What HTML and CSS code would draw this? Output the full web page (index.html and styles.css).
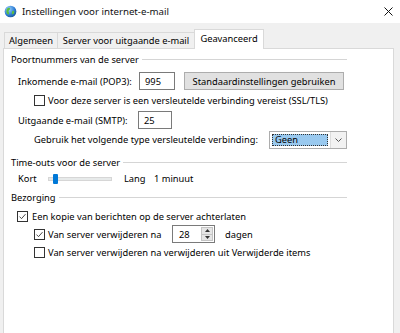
FILE: index.html
```html
<!DOCTYPE html>
<html lang="nl">
<head>
<meta charset="utf-8">
<title>Instellingen voor internet-e-mail</title>
<link rel="stylesheet" href="styles.css">
</head>
<body>
<div class="titlebar">
  <svg class="app-icon" viewBox="0 0 14 14" aria-hidden="true">
    <defs>
      <radialGradient id="g" cx="0.35" cy="0.3" r="0.8">
        <stop offset="0" stop-color="#9fd3ff"/>
        <stop offset="0.6" stop-color="#2f7fd6"/>
        <stop offset="1" stop-color="#17508f"/>
      </radialGradient>
    </defs>
    <circle cx="7" cy="7" r="6.3" fill="url(#g)"/>
    <path d="M4.2 3.2c1.3-.6 2.6 0 2.4 1.2-.2 1.1-1.600 1-1.7 2.2-.1 1.2 1 1.7.6 2.9-.4 1-1.7.8-2.3-.3C2.5 8 2.4 5.9 3 4.6c.3-.6.7-1.1 1.2-1.4z" fill="#5bbf3f"/>
    <path d="M9.2 6.4c1-.3 1.9.3 1.8 1.3-.1 1.2-1.2 2.4-2.1 2.2-.8-.2-.6-1.2-.3-1.9.2-.6 0-1.4.6-1.6z" fill="#5bbf3f"/>
  </svg>
  <span class="title">Instellingen voor internet-e-mail</span>
  <svg class="close" viewBox="0 0 9 9" aria-hidden="true">
    <path d="M0.5 0.5L8.5 8.5M8.5 0.5L0.5 8.5" stroke="#111" stroke-width="1"/>
  </svg>
</div>

<div class="tabs">
  <div class="tab tab-general">Algemeen</div>
  <div class="tab tab-outgoing">Server voor uitgaande e-mail</div>
  <div class="tab tab-advanced active">Geavanceerd</div>
</div>

<div class="panel">
  <div class="legend lg-ports"><span>Poortnummers van de server</span><i class="rule"></i></div>

  <div class="row row-pop">
    <span class="lbl lbl-pop">Inkomende e-mail (POP3):</span>
    <span class="edit edit-pop">995</span>
    <span class="btn">Standaardinstellingen gebruiken</span>
  </div>

  <div class="row row-ssl">
    <span class="cb"></span>
    <span>Voor deze server is een versleutelde verbinding vereist (SSL/TLS)</span>
  </div>

  <div class="row row-smtp">
    <span class="lbl lbl-smtp">Uitgaande e-mail (SMTP):</span>
    <span class="edit edit-smtp">25</span>
  </div>

  <div class="row row-enc">
    <span class="lbl lbl-enc">Gebruik het volgende type versleutelde verbinding:</span>
    <span class="combo">
      <span class="combo-value"><span class="combo-text">Geen</span></span>
      <span class="combo-arrow">
        <svg viewBox="0 0 7 4" aria-hidden="true"><path d="M0.5 0.5L3.5 3.5L6.5 0.5" fill="none" stroke="#555" stroke-width="1"/></svg>
      </span>
    </span>
  </div>

  <div class="legend lg-timeout"><span>Time-outs voor de server</span><i class="rule"></i></div>

  <div class="row row-slider">
    <span class="lbl lbl-short">Kort</span>
    <span class="track"><span class="thumb"></span></span>
    <span class="lbl lbl-long">Lang</span>
    <span>1 minuut</span>
  </div>

  <div class="legend lg-delivery"><span>Bezorging</span><i class="rule"></i></div>

  <div class="row row-keep">
    <span class="cb checked"><svg viewBox="0 0 11 11" aria-hidden="true"><path d="M1.8 5.6L4.3 8.1L9.2 2.6" fill="none" stroke="#222" stroke-width="1"/></svg></span>
    <span>Een kopie van berichten op de server achterlaten</span>
  </div>

  <div class="row row-remove">
    <span class="cb checked"><svg viewBox="0 0 11 11" aria-hidden="true"><path d="M1.8 5.6L4.3 8.1L9.2 2.6" fill="none" stroke="#222" stroke-width="1"/></svg></span>
    <span class="lbl lbl-remove">Van server verwijderen na</span>
    <span class="spin">
      <span class="spin-value">28</span>
      <span class="spin-btns">
        <span class="spin-btn"><svg viewBox="0 0 5 3" aria-hidden="true"><path d="M0 3L2.5 0L5 3z" fill="#333"/></svg></span>
        <span class="spin-btn"><svg viewBox="0 0 5 3" aria-hidden="true"><path d="M0 0L2.5 3L5 0z" fill="#333"/></svg></span>
      </span>
    </span>
    <span class="days">dagen</span>
  </div>

  <div class="row row-deleted">
    <span class="cb"></span>
    <span>Van server verwijderen na verwijderen uit Verwijderde items</span>
  </div>
</div>
</body>
</html>
```

FILE: styles.css
```css
html, body {
  margin: 0;
  padding: 0;
}

body {
  width: 400px;
  height: 333px;
  overflow: hidden;
  background: #f0f0f0;
  font-family: "Noto Sans", "Open Sans", sans-serif;
  font-size: 9.3px;
  color: #000;
}

/* ---------- title bar ---------- */
.titlebar {
  height: 23px;
  background: #fff;
  display: flex;
  align-items: center;
  padding-left: 4px;
}

.app-icon {
  width: 13px;
  height: 13px;
  margin-right: 5px;
  flex: none;
}

.title {
  flex: 1;
  font-size: 9.7px;
  color: #111;
}

.close {
  width: 9px;
  height: 9px;
  margin-right: 7px;
  flex: none;
}

/* ---------- tabs ---------- */
.tabs {
  height: 26px;
  display: flex;
  align-items: flex-end;
  padding-left: 4px;
  position: relative;
  z-index: 1;
}

.tab {
  box-sizing: border-box;
  height: 16px;
  margin-bottom: 1px;
  border: 1px solid #d9d9d9;
  border-bottom: none;
  background: #f0f0f0;
  display: flex;
  align-items: center;
  justify-content: center;
  white-space: nowrap;
}

.tab + .tab {
  margin-left: -1px;
}

.tab-general { width: 54px; }
.tab-outgoing { width: 138px; }

.tab-advanced {
  width: 70px;
  height: 20px;
  margin-bottom: 0;
  background: #fff;
  padding-bottom: 2px;
}

/* ---------- panel ---------- */
.panel {
  box-sizing: border-box;
  margin-top: -1px;
  margin-left: 3px;
  width: 391px;
  height: 300px;
  background: #fff;
  border: 1px solid #d9d9d9;
}

.legend {
  display: flex;
  align-items: center;
  height: 14px;
  margin-left: 7px;
  width: 336px;
  white-space: nowrap;
}

.legend span {
  margin-right: 3px;
}

.legend .rule {
  flex: 1;
  height: 1px;
  background: #d5d5d5;
}

.lg-ports { margin-top: 3px; }
.lg-timeout { margin-top: 6px; }
.lg-delivery { margin-top: 4px; }

.row {
  display: flex;
  align-items: center;
  white-space: nowrap;
}

.lbl {
  flex: none;
}

/* port rows */
.row-pop {
  margin-top: 6px;
  height: 18px;
  padding-left: 14px;
}

.lbl-pop { width: 121px; }

.edit {
  box-sizing: border-box;
  height: 18px;
  border: 1px solid #7a7a7a;
  background: #fff;
  display: flex;
  align-items: center;
  padding-left: 5px;
  flex: none;
}

.edit-pop { width: 36px; }

.btn {
  box-sizing: border-box;
  width: 160px;
  height: 18px;
  margin-left: 9px;
  background: #e1e1e1;
  border: 1px solid #adadad;
  display: flex;
  align-items: center;
  justify-content: center;
  flex: none;
}

.row-ssl {
  margin-top: 3px;
  height: 14px;
  padding-left: 30px;
}

.cb {
  box-sizing: border-box;
  width: 11px;
  height: 11px;
  border: 1px solid #333;
  background: #fff;
  margin-right: 3px;
  flex: none;
  display: flex;
}

.cb svg {
  width: 9px;
  height: 9px;
}

.row-smtp {
  margin-top: 4px;
  height: 18px;
  padding-left: 14px;
}

.lbl-smtp { width: 120px; }
.edit-smtp { width: 34px; }

.row-enc {
  margin-top: 1px;
  height: 19px;
  padding-left: 30px;
}

.lbl-enc { width: 235px; }

.combo {
  box-sizing: border-box;
  width: 78px;
  height: 18px;
  border: 1px solid #adadad;
  background: #fff;
  display: flex;
  flex: none;
}

.combo-value {
  flex: 1;
  padding: 2px;
  display: flex;
}

.combo-text {
  flex: 1;
  background: #99c9ef;
  outline: 1px dotted #333;
  outline-offset: -1px;
  display: flex;
  align-items: center;
  padding-left: 3px;
}

.combo-arrow {
  width: 15px;
  background: #f2f2f2;
  border-left: 1px solid #dcdcdc;
  display: flex;
  align-items: center;
  justify-content: center;
}

.combo-arrow svg {
  width: 7px;
  height: 4px;
}

/* slider */
.row-slider {
  margin-top: 2px;
  height: 15px;
  padding-left: 14px;
}

.lbl-short { width: 30px; }

.track {
  box-sizing: border-box;
  width: 64px;
  height: 4px;
  background: #e7eaea;
  border: 1px solid #d6d6d6;
  margin-right: 12px;
  position: relative;
  flex: none;
}

.thumb {
  position: absolute;
  left: 4px;
  top: -4px;
  width: 5px;
  height: 10px;
  background: #0078d7;
  border-radius: 1px;
}

.lbl-long { width: 30px; }

/* delivery */
.row-keep {
  margin-top: 5px;
  height: 14px;
  padding-left: 13px;
}

.row-keep .cb { margin-right: 4px; }

.row-remove {
  margin-top: 1px;
  height: 20px;
  padding-left: 30px;
}

.lbl-remove { width: 124px; }

.spin {
  box-sizing: border-box;
  width: 43px;
  height: 18px;
  border: 1px solid #7a7a7a;
  background: #fff;
  display: flex;
  flex: none;
}

.spin-value {
  flex: 1;
  display: flex;
  align-items: center;
  padding-left: 6px;
}

.spin-btns {
  width: 12px;
  display: flex;
  flex-direction: column;
  padding: 1px 1px 1px 0;
}

.spin-btn {
  flex: 1;
  background: #e5e5e5;
  border: 1px solid #c4c4c4;
  display: flex;
  align-items: center;
  justify-content: center;
}

.spin-btn + .spin-btn {
  border-top: none;
}

.spin-btn svg {
  width: 5px;
  height: 3px;
}

.days {
  margin-left: 10px;
}

.row-deleted {
  margin-top: 1px;
  height: 14px;
  padding-left: 30px;
}
```
